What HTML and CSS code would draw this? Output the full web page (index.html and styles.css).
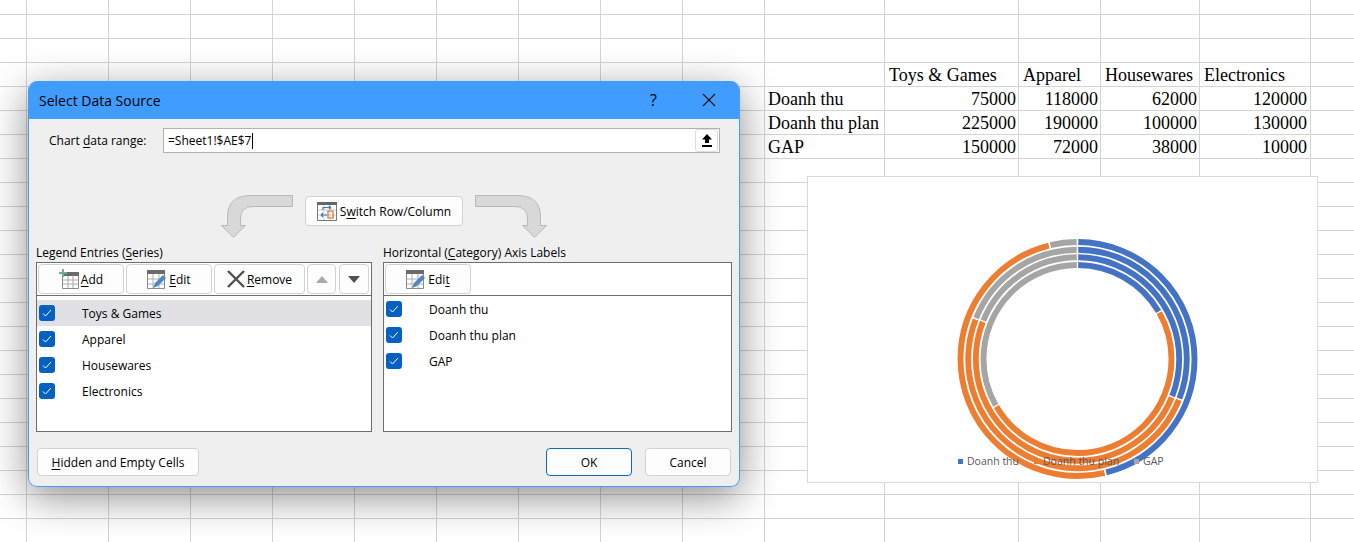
FILE: index.html
```html
<!DOCTYPE html>
<html lang="en">
<head>
  <meta charset="UTF-8" />
  <title>Select Data Source</title>
  <link rel="stylesheet" href="styles.css">
</head>
<body>

<div class="sheet">
  <div class="sheet-left"></div>
  <div class="sheet-right">
    <table class="data">
      <tr><td></td><td>Toys &amp; Games</td><td>Apparel</td><td>Housewares</td><td>Electronics</td></tr>
      <tr><td>Doanh thu</td><td class="num">75000</td><td class="num">118000</td><td class="num">62000</td><td class="num">120000</td></tr>
      <tr><td>Doanh thu plan</td><td class="num">225000</td><td class="num">190000</td><td class="num">100000</td><td class="num">130000</td></tr>
      <tr><td>GAP</td><td class="num">150000</td><td class="num">72000</td><td class="num">38000</td><td class="num">10000</td></tr>
    </table>
  </div>

  <!-- chart -->
  <div class="chart">
    <svg class="rings" width="509" height="305" viewBox="0 0 509 305" fill="none" stroke-width="5.9">
      <g transform="rotate(-90 269.5 182)">
        <circle cx="269.5" cy="182" r="94" pathLength="360" stroke="#4472c4" stroke-dasharray="59.2 360" stroke-dashoffset="-0.4"/>
        <circle cx="269.5" cy="182" r="94" pathLength="360" stroke="#ed7d31" stroke-dasharray="179.2 360" stroke-dashoffset="-60.4"/>
        <circle cx="269.5" cy="182" r="94" pathLength="360" stroke="#a5a5a5" stroke-dasharray="119.2 360" stroke-dashoffset="-240.4"/>
        <circle cx="269.5" cy="182" r="101.7" pathLength="360" stroke="#4472c4" stroke-dasharray="111 360" stroke-dashoffset="-0.4"/>
        <circle cx="269.5" cy="182" r="101.7" pathLength="360" stroke="#ed7d31" stroke-dasharray="179.2 360" stroke-dashoffset="-112.2"/>
        <circle cx="269.5" cy="182" r="101.7" pathLength="360" stroke="#a5a5a5" stroke-dasharray="67.4 360" stroke-dashoffset="-292.2"/>
        <circle cx="269.5" cy="182" r="109.3" pathLength="360" stroke="#4472c4" stroke-dasharray="110.8 360" stroke-dashoffset="-0.4"/>
        <circle cx="269.5" cy="182" r="109.3" pathLength="360" stroke="#ed7d31" stroke-dasharray="179.2 360" stroke-dashoffset="-112"/>
        <circle cx="269.5" cy="182" r="109.3" pathLength="360" stroke="#a5a5a5" stroke-dasharray="67.6 360" stroke-dashoffset="-292"/>
        <circle cx="269.5" cy="182" r="117" pathLength="360" stroke="#4472c4" stroke-dasharray="165.4 360" stroke-dashoffset="-0.4"/>
        <circle cx="269.5" cy="182" r="117" pathLength="360" stroke="#ed7d31" stroke-dasharray="179.2 360" stroke-dashoffset="-166.6"/>
        <circle cx="269.5" cy="182" r="117" pathLength="360" stroke="#a5a5a5" stroke-dasharray="13 360" stroke-dashoffset="-346.6"/>
      </g>
    </svg>
    <div class="legend">
      <span class="legend-item"><i class="mark blue"></i>Doanh thu</span>
      <span class="legend-item"><i class="mark orange"></i>Doanh thu plan</span>
      <span class="legend-item"><i class="mark gray"></i>GAP</span>
    </div>
  </div>

  <!-- dialog -->
  <div class="dialog">
    <div class="titlebar">
      <span class="title">Select Data Source</span>
      <div class="title-btns">
        <span class="help">?</span>
        <svg width="14" height="14" viewBox="0 0 14 14" stroke="#111" stroke-width="1.1" fill="none"><path d="M1 1 13 13M13 1 1 13"/></svg>
      </div>
    </div>

    <div class="range-row">
      <label class="range-label">Chart <u>d</u>ata range:</label>
      <div class="range-input">
        <span class="range-value">=Sheet1!$AE$7</span>
        <button class="collapse">
          <svg width="10" height="13" viewBox="0 0 10 13" fill="#000"><path d="M5 0 10 5.5H7V9H3V5.5H0ZM0 11H10V13H0Z"/></svg>
        </button>
      </div>
    </div>

    <div class="swap-row">
      <svg class="bent" width="72" height="43" viewBox="0 0 72 43" fill="#d8d8d8" stroke="#b9b9b9"><path d="M71.5 .5V11.5H32Q19.5 11.5 19.5 24V30.5H24.5L12.5 42.5 .5 30.5H6.5V22Q6.5 .5 30 .5Z"/></svg>
      <button class="btn swap-btn">
        <svg width="20" height="19" viewBox="0 0 20 19" fill="none">
          <path d="M.5 .5H19.5V18.5H.5Z" fill="#fff" stroke="#777"/>
          <path d="M0 0H20V3H0Z" fill="#666"/>
          <path d="M1 8H19M1 13H19M7 3V18M13 3V18" stroke="#ccc"/>
          <path d="M4 13H10M4 13 6 11M4 13 6 15M6 8V5.500H14M14 5.500 12 4M14 5.500 12 7" stroke="#3f78b8" stroke-width="1.200"/>
          <path d="M11 9H16V16H11Z" stroke="#d9691e" stroke-width="1.200"/>
        </svg>
        <span>S<u>w</u>itch Row/Column</span>
      </button>
      <svg class="bent flip" width="72" height="43" viewBox="0 0 72 43" fill="#d8d8d8" stroke="#b9b9b9"><path d="M71.5 .5V11.5H32Q19.5 11.5 19.5 24V30.500H24.500L12.500 42.500 .5 30.500H6.500V22Q6.500 .5 30 .5Z"/></svg>
    </div>

    <div class="panels">
      <div class="panel panel-series">
        <div class="panel-label">Legend Entries (<u>S</u>eries)</div>
        <div class="panel-box">
          <div class="toolbar">
            <button class="btn tool w86">
              <svg width="20" height="20" viewBox="0 0 20 20" fill="none">
                <path d="M3.500 5.500H19.500V19.500H3.500Z" fill="#fff" stroke="#8a8a8a"/>
                <path d="M3 3H20V7H3Z" fill="#6b6b6b"/>
                <path d="M4 11H19M4 15H19M9 7V19M14 7V19" stroke="#a8a8a8"/>
                <path d="M4 0V8M0 4H8" stroke="#6fae9a" stroke-width="2"/>
              </svg>
              <span><u>A</u>dd</span>
            </button>
            <button class="btn tool w86">
              <svg width="20" height="19" viewBox="0 0 20 19" fill="none">
                <path d="M.5 .5H17.500V18.500H.5Z" fill="#fff" stroke="#8a8a8a"/>
                <path d="M0 0H18V4H0Z" fill="#6b6b6b"/>
                <path d="M1 9H17M1 14H17M6 4V18M12 4V18" stroke="#b0b0b0"/>
                <path d="M6 18 8 13 16 5 19 8 11 16Z" fill="#4f86c6"/>
              </svg>
              <span><u>E</u>dit</span>
            </button>
            <button class="btn tool w91">
              <svg width="18" height="18" viewBox="0 0 18 18" fill="none" stroke="#505050" stroke-width="2.400"><path d="M1 1 17 17M17 1 1 17"/></svg>
              <span><u>R</u>emove</span>
            </button>
            <button class="btn tool w29"><svg width="12" height="7" viewBox="0 0 12 7" fill="#a9a9a9"><path d="M6 0 12 7H0Z"/></svg></button>
            <button class="btn tool w30 down"><svg width="12" height="7" viewBox="0 0 12 7" fill="#505050"><path d="M6 7 12 0H0Z"/></svg></button>
          </div>
          <ul class="list list-series">
            <li class="selected"><span class="check"><svg width="10" height="8" viewBox="0 0 10 8" fill="none" stroke="#fff"><path d="M1 4.500 3.500 7 9 1"/></svg></span>Toys &amp; Games</li>
            <li><span class="check"><svg width="10" height="8" viewBox="0 0 10 8" fill="none" stroke="#fff"><path d="M1 4.500 3.500 7 9 1"/></svg></span>Apparel</li>
            <li><span class="check"><svg width="10" height="8" viewBox="0 0 10 8" fill="none" stroke="#fff"><path d="M1 4.500 3.500 7 9 1"/></svg></span>Housewares</li>
            <li><span class="check"><svg width="10" height="8" viewBox="0 0 10 8" fill="none" stroke="#fff"><path d="M1 4.500 3.500 7 9 1"/></svg></span>Electronics</li>
          </ul>
        </div>
      </div>

      <div class="panel panel-axis">
        <div class="panel-label">Horizontal (<u>C</u>ategory) Axis Labels</div>
        <div class="panel-box">
          <div class="toolbar">
            <button class="btn tool w86">
              <svg width="20" height="19" viewBox="0 0 20 19" fill="none">
                <path d="M.5 .5H17.500V18.500H.5Z" fill="#fff" stroke="#8a8a8a"/>
                <path d="M0 0H18V4H0Z" fill="#6b6b6b"/>
                <path d="M1 9H17M1 14H17M6 4V18M12 4V18" stroke="#b0b0b0"/>
                <path d="M6 18 8 13 16 5 19 8 11 16Z" fill="#4f86c6"/>
              </svg>
              <span>Edi<u>t</u></span>
            </button>
          </div>
          <ul class="list">
            <li><span class="check"><svg width="10" height="8" viewBox="0 0 10 8" fill="none" stroke="#fff"><path d="M1 4.500 3.500 7 9 1"/></svg></span>Doanh thu</li>
            <li><span class="check"><svg width="10" height="8" viewBox="0 0 10 8" fill="none" stroke="#fff"><path d="M1 4.500 3.500 7 9 1"/></svg></span>Doanh thu plan</li>
            <li><span class="check"><svg width="10" height="8" viewBox="0 0 10 8" fill="none" stroke="#fff"><path d="M1 4.500 3.500 7 9 1"/></svg></span>GAP</li>
          </ul>
        </div>
      </div>
    </div>

    <div class="footer">
      <button class="btn foot hidden-btn"><u>H</u>idden and Empty Cells</button>
      <div class="footer-right">
        <button class="btn foot ok">OK</button>
        <button class="btn foot">Cancel</button>
      </div>
    </div>
  </div>
</div>

</body>
</html>
```

FILE: styles.css
```css
/* base */
body {
  margin: 0;
  font-family: "Open Sans", "Noto Sans", sans-serif;
  font-size: 12px;
  color: #000;
  background: #fff;
}

u {
  text-underline-offset: 2px;
}

/* spreadsheet */
.sheet {
  position: relative;
  display: flex;
  width: 1354px;
  height: 542px;
  overflow: hidden;
  background: linear-gradient(#d4d4d4 1px, transparent 1px) 0 14px / 100% 24px;
}

.sheet-left {
  width: 764px;
  flex: none;
  background: linear-gradient(to right, #d4d4d4 1px, transparent 1px) 26px 0 / 82px 100% repeat-x;
}

.sheet-right {
  flex: 1;
  padding-top: 63px;
  background:
    linear-gradient(#d4d4d4, #d4d4d4) 0 0 / 1px 100% no-repeat,
    linear-gradient(#d4d4d4, #d4d4d4) 120px 0 / 1px 100% no-repeat,
    linear-gradient(#d4d4d4, #d4d4d4) 254px 0 / 1px 100% no-repeat,
    linear-gradient(#d4d4d4, #d4d4d4) 336px 0 / 1px 100% no-repeat,
    linear-gradient(#d4d4d4, #d4d4d4) 435px 0 / 1px 100% no-repeat,
    linear-gradient(#d4d4d4, #d4d4d4) 546px 0 / 1px 100% no-repeat;
}

.data {
  width: 546px;
  table-layout: fixed;
  border-collapse: collapse;
  font-family: "Liberation Serif", serif;
  font-size: 18px;
}

.data td {
  height: 24px;
  padding: 0 3px 0 4px;
  line-height: 24px;
  white-space: nowrap;
}

.data td:nth-child(1) { width: 113px; }
.data td:nth-child(2) { width: 127px; padding-left: 5px; }
.data td:nth-child(3) { width: 75px; }
.data td:nth-child(4) { width: 92px; }

.data .num {
  text-align: right;
}

/* chart */
.chart {
  position: absolute;
  left: 807px;
  top: 176px;
  width: 509px;
  height: 305px;
  background: #fff;
  border: 1px solid #d9d9d9;
}

.rings {
  display: block;
}

.legend {
  position: absolute;
  left: 150px;
  top: 276px;
  display: flex;
  gap: 15px;
  font-size: 10.5px;
  line-height: 16px;
  color: #595959;
  white-space: nowrap;
}

.legend-item {
  display: flex;
  align-items: center;
  gap: 4px;
}

.mark {
  width: 5px;
  height: 5px;
}

.blue { background: #4472c4; }
.orange { background: #ed7d31; }
.gray { background: #a5a5a5; }

/* dialog */
.dialog {
  position: absolute;
  left: 28px;
  top: 81px;
  width: 712px;
  height: 406px;
  box-sizing: border-box;
  background: #efefef;
  border: 1px solid #4a9bf5;
  border-top: 0;
  border-radius: 9px;
  overflow: hidden;
}

.sheet::after {
  content: "";
  position: absolute;
  left: 28px;
  top: 81px;
  width: 712px;
  height: 406px;
  border-radius: 9px;
  box-shadow: 0 10px 40px rgba(0, 0, 0, 0.45);
  z-index: 0;
}

.dialog {
  z-index: 1;
}

.titlebar {
  display: flex;
  align-items: center;
  justify-content: space-between;
  height: 38px;
  padding: 0 23px 0 10px;
  background: #409cff;
}

.title {
  font-size: 14px;
}

.title-btns {
  display: flex;
  align-items: center;
  gap: 45px;
}

.help {
  font-size: 16px;
}

/* buttons */
.btn {
  display: inline-flex;
  align-items: center;
  justify-content: center;
  box-sizing: border-box;
  padding: 0;
  font: inherit;
  color: #000;
  background: #fdfdfd;
  border: 1px solid #d2d2d2;
  border-radius: 4px;
}

/* chart data range */
.range-row {
  display: flex;
  align-items: center;
  margin-top: 9px;
  padding-left: 20px;
}

.range-label {
  width: 114px;
}

.range-input {
  display: flex;
  align-items: center;
  justify-content: space-between;
  box-sizing: border-box;
  width: 557px;
  height: 25px;
  padding: 0 1px 0 4px;
  background: #fff;
  border: 1px solid #b2b2b2;
}

.range-value {
  padding-right: 1px;
  border-right: 1px solid #000;
  line-height: 16px;
}

.collapse {
  display: flex;
  align-items: center;
  justify-content: center;
  width: 23px;
  height: 23px;
  padding: 0;
  background: #fff;
  border: 1px solid #ddd;
  border-radius: 3px;
}

/* switch row */
.swap-row {
  display: flex;
  justify-content: center;
  gap: 12px;
  height: 43px;
  margin-top: 42px;
}

.flip {
  transform: scaleX(-1);
}

.swap-btn {
  gap: 3px;
  width: 158px;
  height: 30px;
  margin-top: 1px;
}

/* series and axis panels */
.panels {
  display: flex;
  gap: 11px;
  margin-top: 8px;
  padding-left: 7px;
}

.panel-series { width: 336px; }
.panel-axis { width: 349px; }

.panel-label {
  height: 16px;
  line-height: 14px;
}

.panel-box {
  box-sizing: border-box;
  height: 170px;
  background: #fff;
  border: 1px solid #6e6e6e;
}

.toolbar {
  display: flex;
  gap: 2px;
  height: 32px;
  padding: 1px 0 0 1px;
  box-sizing: border-box;
  border-bottom: 1px solid #6e6e6e;
  height: 33px;
}

.tool {
  gap: 2px;
  height: 30px;
}

.w86 { width: 86px; }
.w91 { width: 91px; }
.w29 { width: 29px; }
.w30 { width: 30px; }

.down {
  margin-left: 1px;
}

.list {
  margin: 0;
  padding: 0;
  list-style: none;
}

.list-series {
  padding-top: 4px;
}

.list li {
  display: flex;
  align-items: center;
  gap: 27px;
  height: 26px;
  padding-left: 2px;
}

.selected {
  background: #e0e0e5;
}

.check {
  display: flex;
  align-items: center;
  justify-content: center;
  width: 16px;
  height: 16px;
  background: #0561c1;
  border-radius: 3px;
}

/* footer */
.footer {
  display: flex;
  justify-content: space-between;
  margin-top: 16px;
  padding: 0 8px;
}

.footer-right {
  display: flex;
  gap: 13px;
}

.foot {
  width: 86px;
  height: 28px;
}

.hidden-btn {
  width: 162px;
}

.ok {
  border-color: #0f6cbd;
}
```
